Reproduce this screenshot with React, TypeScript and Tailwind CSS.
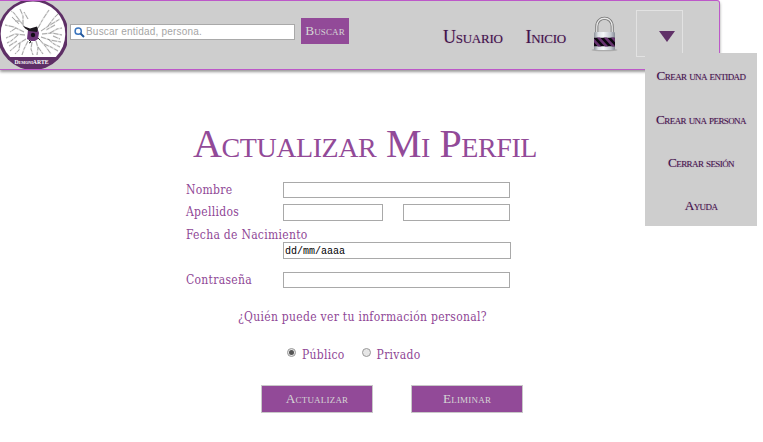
import React from "react";

const caps = "[font-variant:small-caps] font-['Liberation_Serif',serif] whitespace-nowrap";
const label = "font-['DejaVu_Serif_Condensed','DejaVu_Serif',serif] text-[12px] leading-[16px] tracking-[0.29px] text-[#8f4796] whitespace-nowrap";
const field = "block border border-[#a9a9a9] bg-white rounded-none outline-none";
const menuText = "text-[#3f1349] [text-shadow:0_0_1px_rgba(143,71,150,0.5)]";

function Logo() {
  const cracks =
    "M26 28L20 20L14 12L11 10M20 20L15 20M23 24L23 15L20 8M24 31L14 26L5 24M16 27L10 31M25 34L15 33L6 37M18 34L11 40L7 42M26 38L18 43L10 50M20 42L19 49L15 53M28 40L24 48L22 54M32 41L31 48L33 54M36 40L38 47L37 54M38 46L43 53M40 39L46 46L51 53M44 43L51 46L58 50M41 36L50 39L61 41M48 38L54 43L60 46M42 33L52 32L62 34M50 32L57 28L62 27M41 30L50 24L60 18M48 25L54 17L58 13M38 27L43 18L49 9M28 18L24 11M12 16L19 23M9 45L17 40M55 24L46 29M53 35L60 38";
  return (
    <svg width="67" height="68" viewBox="0 0 67 68" className="block shrink-0">
      <defs>
        <clipPath id="disc"><circle cx="33" cy="33.5" r="35.5" /></clipPath>
        <clipPath id="glass"><path d="M0 0H67V56H0Z" /></clipPath>
      </defs>
      <g clipPath="url(#disc)">
        <rect width="67" height="68" fill="#5e2f66" />
        <ellipse cx="33" cy="33" rx="32.3" ry="32.5" fill="#fff" clipPath="url(#glass)" />
        <path d={cracks} stroke="#c4c4c4" strokeWidth="1.5" fill="none" opacity=".5" />
        <path d={cracks} stroke="#666" strokeWidth=".7" strokeDasharray="5 1.5 3 2" fill="none" opacity=".65" />
        <path d="M28 29L38 29L39 32L38 38L35 40L31 40L27 38Z" fill="#6c3578" />
        <path d="M23 25L30 27.5L37 25.5L38 28L37 31L29 30L26 28Z" fill="#1c171e" />
        <circle cx="33" cy="34" r="2.2" fill="#140d18" />
        <path d="M29 39L31 41L29 42M38 37L40 39" stroke="#222" strokeWidth="1" fill="none" />
      </g>
      <text x="14.5" y="63.3" fill="#fff" fontSize="7" fontWeight="700" fontFamily="Liberation Serif, serif" textLength="34" lengthAdjust="spacingAndGlyphs" style={{ fontVariant: "small-caps" }}>DemoniARTE</text>
    </svg>
  );
}

function Lock() {
  return (
    <svg width="27" height="36" viewBox="0 0 27 36" className="block">
      <defs>
        <linearGradient id="metal"><stop stopColor="#8d929a" /><stop offset=".2" stopColor="#dde1e6" /><stop offset=".45" stopColor="#f5f7f9" /><stop offset=".8" stopColor="#c3c8d0" /><stop offset="1" stopColor="#858b95" /></linearGradient>
        <clipPath id="band"><rect x="3" y="21.5" width="21" height="9" /></clipPath>
      </defs>
      <ellipse cx="13.5" cy="34" rx="13" ry="1.3" fill="#888" opacity=".5" />
      <path d="M5.8 18V10.5C5.8 -.5 21.2 -.5 21.2 10.5V18" fill="none" stroke="#747474" strokeWidth="3" />
      <path d="M5.8 18V10.5C5.8 -.5 21.2 -.5 21.2 10.5V18" fill="none" stroke="#e9e9e9" strokeWidth="1.3" />
      <rect x="3" y="16" width="21" height="18" rx="1.2" fill="url(#metal)" />
      <g clipPath="url(#band)">
        <rect x="3" y="21.5" width="21" height="9" fill="#0c0710" />
        <path d="M-1 20L10 32M6 20L17 32M13 20L24 32M20 20L31 32" stroke="#673370" strokeWidth="2.6" />
      </g>
    </svg>
  );
}

function Header() {
  return (
    <header className="relative flex h-[70px] w-[720px] items-start rounded-r-[3px] border border-l-0 border-[#bd58c9] bg-[#cecece] shadow-[0_2px_3px_rgba(0,0,0,0.4)]">
      <Logo />
      <div className="mt-[23px] ml-[3px] flex h-4 w-[225px] items-center border border-[#a9a9a9] bg-white pl-[3px]">
        <svg width="11" height="11" viewBox="0 0 11 11" fill="none">
          <circle cx="4.2" cy="4.2" r="3.1" stroke="#3a74bd" strokeWidth="1.5" />
          <path d="M6.5 6.5L10 10" stroke="#23579b" strokeWidth="2" />
        </svg>
        <span className="ml-[1px] font-['Liberation_Sans',sans-serif] text-[10px] leading-[14px] tracking-[0.2px] whitespace-nowrap text-[#a5a5a5]">Buscar entidad, persona.</span>
      </div>
      <button className={`${caps} mt-[17px] ml-[6px] h-[26px] w-12 bg-[#924a98] text-[13.3px] tracking-[0.1px] text-[#d5d5d5]`}>Buscar</button>
      <nav className={`${caps} ${menuText} mt-[26px] ml-[94px] flex w-[123px] justify-between text-[18px] leading-[20px] tracking-[-0.25px]`}>
        <a>Usuario</a>
        <a>Inicio</a>
      </nav>
      <div className="mt-[15px] ml-[25px]"><Lock /></div>
      <div className="mt-[9px] ml-[18px] flex h-[47px] w-[47px] justify-center border border-[#e2e2e2] pt-[20px] pl-[15px]">
        <svg width="16" height="11" viewBox="0 0 16 11"><path d="M0 0H16L8 11Z" fill="#603168" /></svg>
      </div>
      <div className={`${caps} ${menuText} absolute top-[52px] left-[645px] flex h-[173px] w-28 flex-col items-center bg-[#cecece] pt-[15px] text-[13.3px] leading-[16px] tracking-[-0.6px]`}>
        <a className="mb-[28px]">Crear una entidad</a>
        <a className="mb-[27px]">Crear una persona</a>
        <a className="mb-[27px]">Cerrar sesión</a>
        <a>Ayuda</a>
      </div>
    </header>
  );
}

function Radio({ on, text }: { on?: boolean; text: string }) {
  return (
    <label className="flex items-start">
      <span className="mt-[1px] flex h-[9px] w-[9px] items-center justify-center rounded-full border border-[#999] bg-[#e6e6e6]">
        {on && <span className="h-[5px] w-[5px] rounded-full bg-[#555]" />}
      </span>
      <span className={`${label} ml-[6px]`}>{text}</span>
    </label>
  );
}

export default function App() {
  const button = `${caps} h-7 w-28 border border-[#c8c8c8] bg-[#924a98] text-[13.3px] tracking-[0.2px] text-[#d5d5d5]`;
  return (
    <div className="h-[442px] w-[763px] overflow-hidden bg-white">
      <Header />
      <main className="pl-[186px]">
        <h1 className={`${caps} mt-[50px] ml-[7px] h-[62px] text-[40px] leading-[47px] tracking-[-0.42px] text-[#924a98]`}>Actualizar Mi Perfil</h1>
        <form className="w-[340px]">
          <div className="flex h-[22px]">
            <span className={`${label} w-[97px]`}>Nombre</span>
            <input className={`${field} h-4 w-[227px]`} />
          </div>
          <div className="flex h-[23px]">
            <span className={`${label} w-[97px]`}>Apellidos</span>
            <input className={`${field} h-[17px] w-[100px]`} />
            <input className={`${field} ml-5 h-[17px] w-[107px]`} />
          </div>
          <div className={`${label} h-[15px]`}>Fecha de Nacimiento</div>
          <div className={`${field} ml-[97px] h-[17px] w-[228px] pl-[1px] font-['Liberation_Mono',monospace] text-[10px] leading-[17px] text-black`}>dd/mm/aaaa</div>
          <div className="mt-[13px] flex h-[37px]">
            <span className={`${label} w-[97px]`}>Contraseña</span>
            <input className={`${field} h-4 w-[227px]`} />
          </div>
          <p className={`${label} ml-[52px] h-[38px]`}>¿Quién puede ver tu información personal?</p>
          <div className="ml-[101px] flex h-[38px] gap-[17px]">
            <Radio on text="Público" />
            <Radio text="Privado" />
          </div>
          <div className="ml-[75px] flex gap-[38px]">
            <button type="button" className={button}>Actualizar</button>
            <button type="button" className={button}>Eliminar</button>
          </div>
        </form>
      </main>
    </div>
  );
}
